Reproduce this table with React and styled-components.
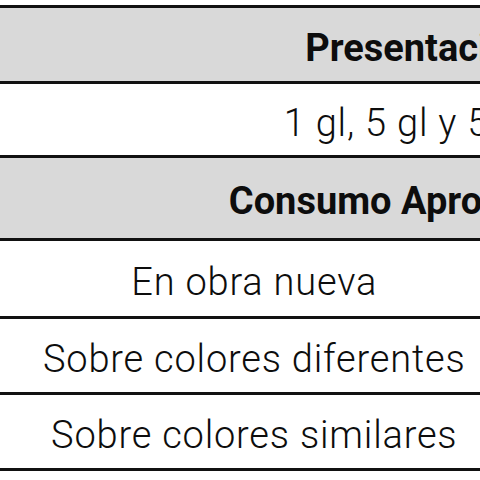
import React from 'react'
import styled, { createGlobalStyle } from 'styled-components'

const GlobalStyle = createGlobalStyle`
  html, body {
    margin: 0;
    padding: 0;
    background: #fff;
    overflow: hidden;
  }
`

const Wrapper = styled.div`
  width: 480px;
  height: 480px;
  overflow: hidden;
  padding-top: 5px;
  box-sizing: border-box;
  font-family: Roboto, 'Liberation Sans', sans-serif;
  color: #0d0d0d;
`

const Table = styled.table`
  width: 836px;
  border-collapse: collapse;
  table-layout: fixed;
`

// text sits a little below the middle of each row, hence the top padding
const Cell = styled.td`
  height: ${p => p.$h - 6}px;
  padding: 6px 0 0;
  text-align: center;
  vertical-align: middle;
  border-top: 3px solid #111;
  border-bottom: 3px solid #111;
  background: ${p => (p.$head ? '#d9d9d9' : '#fff')};
  font-size: 38px;
  font-weight: ${p => (p.$head ? 700 : 300)};
  letter-spacing: ${p => (p.$head ? 0 : 0.8)}px;
  line-height: 1;
  white-space: nowrap;
  & + & {
    border-left: 3px solid #111;
  }
`

const consumo = [
  { label: 'En obra nueva', value: '30 - 35 m²/gl', h: 75 },
  { label: 'Sobre colores diferentes', value: '35 - 40 m²/gl', h: 73 },
  { label: 'Sobre colores similares', value: '40 - 45 m²/gl', h: 73 },
]

const App = () => (
  <Wrapper>
    <GlobalStyle />
    <Table>
      <colgroup>
        <col style={{ width: 510 }} />
        <col />
      </colgroup>
      <tbody>
        <tr>
          <Cell colSpan={2} $head $h={73}>Presentación</Cell>
        </tr>
        <tr>
          <Cell colSpan={2} $h={71}>1 gl, 5 gl y 55 gl</Cell>
        </tr>
        <tr>
          <Cell colSpan={2} $head $h={80}>Consumo Aproximado</Cell>
        </tr>
        {consumo.map(row => (
          <tr key={row.label}>
            <Cell $h={row.h}>{row.label}</Cell>
            <Cell $h={row.h}>{row.value}</Cell>
          </tr>
        ))}
      </tbody>
    </Table>
  </Wrapper>
)

export default App
